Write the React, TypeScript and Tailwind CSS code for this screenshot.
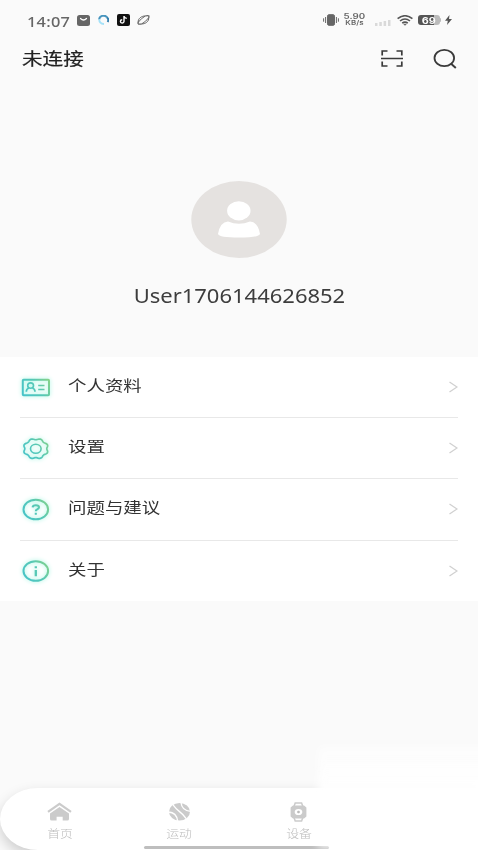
import type { ReactNode } from 'react';

const menuItems = [
  { label: '个人资料', icon: <ProfileIcon /> },
  { label: '设置', icon: <SettingsIcon /> },
  { label: '问题与建议', icon: <HelpIcon /> },
  { label: '关于', icon: <AboutIcon /> },
];

const tabs = [
  { label: '首页', icon: <HomeIcon /> },
  { label: '运动', icon: <SportIcon /> },
  { label: '设备', icon: <WatchIcon /> },
];

function StatusBar() {
  return (
    <div className="flex h-10 items-center pl-[27px] pr-[26px] text-[#666]">
      <div className="-mt-px w-[50px]">
        <span className="inline-block origin-left scale-x-[1.17] font-['Noto_Sans',sans-serif] text-[14px] leading-none font-medium tracking-[0.2px]">
          14:07
        </span>
      </div>
      <svg className="h-[11px] w-[13px]" viewBox="0 0 13 11">
        <rect width="13" height="11" rx="2.5" fill="#666" />
        <path d="M3.5 3.5Q6.5 6.5 9.5 3.5" fill="none" stroke="#fff" strokeWidth="1.2" strokeLinecap="round" />
      </svg>
      <svg className="ml-2 h-[10px] w-[11px]" viewBox="0 0 11 10" fill="none">
        <path d="M9.6 7A4.3 3.8 0 0 0 8.8 2.2" stroke="#347fae" strokeWidth="2" />
        <path d="M9 2.3A4.3 3.8 0 0 0 1.2 4.5" stroke="#4794bd" strokeWidth="2" />
        <path d="M1.2 4.2C1.2 7.2 3.2 8.8 6 9" stroke="#a4e1f8" strokeWidth="1.8" />
      </svg>
      <svg className="ml-2 h-[12px] w-[13px]" viewBox="0 0 13 12">
        <rect width="13" height="12" rx="2" fill="#111" />
        <path d="M7 2v5.5a1.8 1.6 0 1 1-1.8-1.7M7 2.2q.5 2 2.8 2.2" fill="none" stroke="#fff" strokeWidth="1.4" />
      </svg>
      <svg className="ml-[7px] h-[10px] w-[13px]" viewBox="0 0 14 11" fill="none" stroke="#666">
        <path d="M1.2 8C.6 4 5 .9 9 1.1Q4.5 3.5 1.2 8ZM12.7 3C13.2 7 9 10 5 9.8Q9.5 7.5 12.7 3Z" strokeWidth="1.1" fill="#fafafa" />
        <path d="M1 9.9Q2.5 10.4 5 9.8M9 1.1Q12 .4 13 1.2L12.7 3.2M1.2 7.5L1 9.9" strokeWidth="1.4" />
      </svg>
      <div className="flex-1" />
      <svg className="h-[12px] w-[16px]" viewBox="0 0 16 12" fill="none" stroke="#666">
        <rect x="4.5" y=".7" width="7" height="10.6" rx="1.5" fill="#666" />
        <path d="M2.6 3v6M13.4 3v6M.6 4.3v3.4M15.4 4.3v3.4" />
      </svg>
      <div className="ml-[4px] flex w-[23px] flex-col items-center font-['Inter',sans-serif] font-semibold">
        <span className="h-[7px] scale-x-[1.3] text-[7.5px] leading-[7px]">5.90</span>
        <span className="h-[7px] scale-x-[1.22] text-[6.5px] leading-[7px]">KB/s</span>
      </div>
      <svg className="mt-[5px] ml-[9px] h-[6px] w-[16px]" viewBox="0 0 16 6" fill="#d9d9d9">
        <rect y="3" width="2.5" height="3" />
        <rect x="4.3" y="2" width="2.5" height="4" />
        <rect x="8.6" y="1" width="2.5" height="5" />
        <rect x="13" width="2.5" height="6" />
      </svg>
      <svg className="ml-[6px] h-[11px] w-[16px]" viewBox="0 0 16 11" fill="none" stroke="#555" strokeWidth="1.6">
        <path d="M.6 3.7Q8-2.2 15.4 3.7M3 6Q8 2 13 6M5.2 8.2Q8 6 10.8 8.2" />
        <path d="M6.7 9.2h2.6L8 10.3Z" fill="#555" strokeWidth=".6" />
      </svg>
      <div className="ml-[5px] flex h-[10px] w-[22px] items-center justify-center rounded-[3px] bg-linear-to-r from-[#555] from-72% to-[#bbb] to-72%">
        <span className="scale-x-[1.2] font-['Inter',sans-serif] text-[9px] leading-none font-bold text-white">69</span>
      </div>
      <div className="h-[4px] w-[1px] rounded-r bg-[#bbb]" />
      <svg className="ml-1 h-[10px] w-[7px]" viewBox="0 0 7 10">
        <path d="M4.5 0L0 5.7h2.8L2 10l5-6H4Z" fill="#555" />
      </svg>
    </div>
  );
}

function Header() {
  return (
    <header className="flex h-[37px] items-center pl-[22px] pr-[21px]">
      <h1 className="-mt-px origin-left scale-x-[1.21] text-[17px] leading-6 text-[#222] [-webkit-text-stroke:0.2px_#222]">未连接</h1>
      <div className="flex-1" />
      <svg className="h-[17px] w-[22px]" viewBox="0 0 22 17" fill="none" stroke="#3a3a3a" strokeWidth="1.7">
        <path d="M1.2 5.5V1h5.3M15.5 1h5.3v4.5M1.2 11.5V16h5.3M15.5 16h5.3v-4.5M0 8.5h22" />
      </svg>
      <svg className="ml-[30px] h-[20px] w-[24px]" viewBox="0 0 24 20" fill="none" stroke="#3a3a3a" strokeWidth="1.8">
        <ellipse cx="11.3" cy="9" rx="9.8" ry="8.1" />
        <path d="M17.8 14.5l5 4.4" strokeWidth="2" />
      </svg>
    </header>
  );
}

function GradientIcon({ id, children }: { id: string; children: ReactNode }) {
  return (
    <svg
      className="h-[26px] w-[32px] shrink-0 drop-shadow-[0_0_2px_#9ff5e0]"
      viewBox="0 0 32 26"
      fill="none"
      stroke={`url(#${id})`}
      strokeWidth="2"
    >
      <defs>
        <linearGradient id={id} gradientUnits="userSpaceOnUse" x1="2" y1="22" x2="30" y2="4">
          <stop stopColor="#45c3cb" />
          <stop offset=".55" stopColor="#57c8b5" />
          <stop offset="1" stopColor="#8bd383" />
        </linearGradient>
      </defs>
      {children}
    </svg>
  );
}

function ProfileIcon() {
  return (
    <GradientIcon id="profile">
      <rect x="2.8" y="5.7" width="26.2" height="15.6" rx=".8" />
      <ellipse cx="10.6" cy="11.6" rx="2.9" ry="2.7" strokeWidth="1.6" />
      <path d="M6.3 17.8q0-2.9 2.6-3.8M15 17.8q0-2.9-2.6-3.8M18.2 11.5h6.3M18.2 15.5h6.3" strokeWidth="1.7" />
    </GradientIcon>
  );
}

// eight-lobed outline around (15.8, 13.7), wider than it is tall
const gearPoints = Array.from({ length: 96 }, (_, i) => {
  const angle = (i / 96) * Math.PI * 2;
  const radius = 1 - 0.07 * Math.cos(angle * 8);
  return `${(15.8 + 11.8 * radius * Math.cos(angle)).toFixed(2)},${(13.7 + 9.6 * radius * Math.sin(angle)).toFixed(2)}`;
}).join(' ');

function SettingsIcon() {
  return (
    <GradientIcon id="settings">
      <polygon points={gearPoints} strokeWidth="1.7" strokeLinejoin="round" />
      <ellipse cx="15.8" cy="13.7" rx="5.3" ry="4.5" strokeWidth="1.6" />
    </GradientIcon>
  );
}

function HelpIcon() {
  return (
    <GradientIcon id="help">
      <ellipse cx="15.8" cy="13.5" rx="12.3" ry="9.8" />
      <path d="M12.6 11.4Q12.8 9.2 15.8 9.2q3.2 0 3.2 2.1 0 1.3-1.8 2.1-1.4.6-1.4 1.8M15.8 16.7v2" strokeWidth="2.1" />
    </GradientIcon>
  );
}

function AboutIcon() {
  return (
    <GradientIcon id="about">
      <ellipse cx="15.8" cy="13" rx="12.3" ry="9.8" />
      <path d="M15.8 8.2v2M15.8 12v6.2" stroke="#57c8b5" strokeWidth="2.3" />
    </GradientIcon>
  );
}

function HomeIcon() {
  return (
    <svg className="h-[19px] w-[25px]" viewBox="0 0 25 19" fill="#cbcbcb">
      <path d="M1 9.8L12.5 1.8L24 9.8" fill="none" stroke="#cbcbcb" strokeWidth="2.2" />
      <path d="M12.5 4.9L22 11.5V17q0 1.5-1.7 1.5h-4.6v-3.7H9.6v3.7H4.7q-1.7 0-1.7-1.5v-5.5Z" />
    </svg>
  );
}

function SportIcon() {
  return (
    <svg className="h-[19px] w-[25px]" viewBox="0 0 25 19">
      <ellipse cx="12.5" cy="9.7" rx="10.5" ry="8.8" fill="#cbcbcb" />
      <path
        d="M1.5 10Q9.5 10.5 10.6 18.8M14 .5Q14.8 8.6 23.5 9.3M5.6 2.4Q9.5 7.5 12.5 9.6T19.4 16.8"
        fill="none"
        stroke="#fff"
        strokeWidth="1.3"
      />
    </svg>
  );
}

function WatchIcon() {
  return (
    <svg className="h-[20px] w-[25px]" viewBox="0 0 25 20">
      <path d="M8 4.5L9.2 1h6.4l1.2 3.5M8 15.5l1.2 3.5h6.4l1.2-3.5" fill="none" stroke="#cbcbcb" strokeWidth="1.5" />
      <path d="M7 3.6h11l2.4 2v8.8l-2.4 2H7l-2.4-2V5.6Z" fill="#cbcbcb" />
      <ellipse cx="12.5" cy="10" rx="3.8" ry="3.1" fill="#fff" />
      <path d="M12.5 8.7v2.6M11.1 10h2.8" stroke="#bbb" strokeWidth="1.4" />
    </svg>
  );
}

function Profile() {
  return (
    <section className="flex h-[280px] flex-col items-center pt-[103px]">
      <svg className="h-[79px] w-[96px]" viewBox="0 0 96 79">
        <ellipse cx="48" cy="39.5" rx="47.7" ry="38.5" fill="#e5e2e0" />
        <ellipse cx="47.8" cy="30.8" rx="11.7" ry="9.6" fill="#fff" />
        <path d="M27 54Q29 42 37 41.5Q48 46 59 41.5Q67 42 69 54Q68 57.5 48 57.5T27 54Z" fill="#fff" />
      </svg>
      <p className="mt-[24px] scale-x-[1.157] font-['Noto_Sans',sans-serif] text-[19px] leading-[26px] text-[#3d3d3d]">
        User1706144626852
      </p>
    </section>
  );
}

function Menu() {
  return (
    <ul className="h-[244px] bg-white px-5">
      {menuItems.map((item) => (
        <li
          key={item.label}
          className="flex h-[61.2px] items-center border-b border-[#e8e8e8] last:border-b-0"
        >
          {item.icon}
          <span className="-mt-1 ml-4 origin-left scale-x-[1.23] text-[15px] leading-5 text-[#333]">
            {item.label}
          </span>
          <svg className="ml-auto h-[12px] w-[9px]" viewBox="0 0 9 12" fill="none" stroke="#d0d0d0" strokeWidth="1.3">
            <path d="M.5 1L8 6L.5 11" />
          </svg>
        </li>
      ))}
    </ul>
  );
}

function TabBar() {
  return (
    <nav className="relative mt-auto h-[62px]">
      <div className="flex h-[62px] rounded-l-[38px_31px] bg-white shadow-[0_6px_14px_#0000002e]">
        {tabs.map((tab) => (
          <div key={tab.label} className="flex w-[119.5px] flex-col items-center pt-[14px]">
            <div className="flex h-[20px] items-start">{tab.icon}</div>
            <span className="mt-[3px] scale-x-[1.17] text-[11px] leading-4 font-light text-[#bdbdbd]">{tab.label}</span>
          </div>
        ))}
      </div>
      <div className="absolute bottom-px left-[144px] h-[3px] w-[185px] rounded-full bg-[#bebebe]" />
      {/* soft white area over the right end of the bar */}
      <div className="absolute -top-[42px] -right-5 h-[101px] w-[180px] bg-linear-to-b from-white/50 to-white to-50% blur-[4px]" />
      <div className="absolute -right-5 bottom-0 h-[60px] w-[164px] bg-white blur-[3px]" />
    </nav>
  );
}

export default function App() {
  return (
    <div className="flex h-[850px] w-[478px] flex-col overflow-hidden bg-[#fafafa] font-['Noto_Sans_CJK_SC',sans-serif]">
      <StatusBar />
      <Header />
      <Profile />
      <Menu />
      <TabBar />
    </div>
  );
}
